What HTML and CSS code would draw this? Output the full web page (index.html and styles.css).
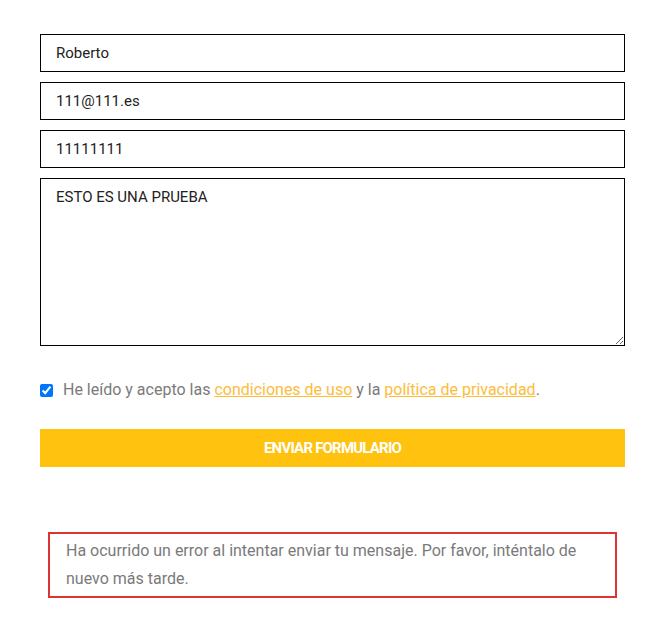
FILE: index.html
```html
<!DOCTYPE html>
<html lang="es">
<head>
    <meta charset="UTF-8">
    <meta name="viewport" content="width=device-width, initial-scale=1.0">
    <title>Contacto</title>
    <link rel="stylesheet" href="styles.css">
</head>
<body>

    <!-- Contact form -->
    <form class="contact-form">
        <input type="text" class="field" value="Roberto">
        <input type="email" class="field" value="111@111.es">
        <input type="tel" class="field" value="11111111">
        <textarea class="field field-area">ESTO ES UNA PRUEBA</textarea>

        <label class="accept">
            <input type="checkbox" checked>
            <span>He leído y acepto las <a href="#">condiciones de uso</a> y la <a href="#">política de privacidad</a>.</span>
        </label>

        <button type="button" class="send-btn">Enviar formulario</button>
    </form>

    <!-- Response message -->
    <div class="form-error">
        Ha ocurrido un error al intentar enviar tu mensaje. Por favor, inténtalo de nuevo más tarde.
    </div>

</body>
</html>
```

FILE: styles.css
```css
body {
    font-family: Roboto, "Liberation Sans", sans-serif;
    margin: 0;
    padding: 34px 22px 0 40px;
    background: #fff;
}
.contact-form {
    width: 585px;
    display: flex;
    flex-direction: column;
}
.field {
    box-sizing: border-box;
    width: 100%;
    height: 38px;
    margin: 0 0 10px 0;
    padding: 0 15px;
    border: 1px solid #000;
    border-radius: 0;
    font-family: Roboto, sans-serif;
    font-size: 15px;
    color: #222;
    background: #fff;
    outline: none;
}
.field-area {
    height: 168px;
    padding-top: 9px;
    resize: vertical;
}
.accept {
    display: flex;
    align-items: center;
    margin-top: 21px;
    font-size: 16px;
    line-height: 26px;
    color: #7a7a7a;
}
.accept input {
    width: 13px;
    height: 13px;
    margin: 0 10px 0 0;
    accent-color: #0075ff;
}
.accept a {
    color: #fcbd3a;
    text-decoration: underline;
}
.send-btn {
    height: 38px;
    margin-top: 26px;
    border: none;
    background-color: #ffc20e;
    color: #fff;
    font-family: Roboto, sans-serif;
    font-weight: 700;
    font-size: 15px;
    letter-spacing: -0.8px;
    text-transform: uppercase;
    cursor: pointer;
}
.form-error {
    box-sizing: border-box;
    width: 569px;
    margin: 65px 0 0 8px;
    padding: 3px 16px;
    border: 2px solid #dd3333;
    font-size: 16px;
    line-height: 28px;
    color: #7a7a7a;
}
```
